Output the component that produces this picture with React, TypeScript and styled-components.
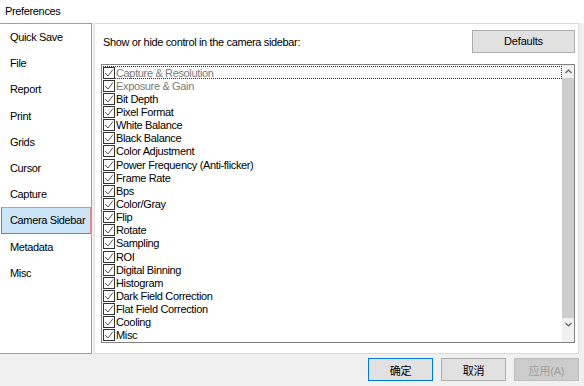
import React from "react";
import styled, { createGlobalStyle } from "styled-components";

const GlobalStyle = createGlobalStyle`
  html, body { margin: 0; padding: 0; }
  body {
    background: #f0f0f0;
    font-family: "Liberation Sans", Arial, sans-serif;
    font-size: 11px;
    letter-spacing: -0.35px;
    color: #000;
  }
`;

const Window = styled.div`
  width: 584px;
  height: 386px;
  display: flex;
  flex-direction: column;
  background: #f0f0f0;
  overflow: hidden;
  white-space: nowrap;
`;

const TitleBar = styled.div`
  height: 23px;
  flex: none;
  background: #fff;
  display: flex;
  align-items: center;
  padding-left: 5px;
  padding-bottom: 2px;
  box-sizing: border-box;
`;

const Body = styled.div`
  height: 331px;
  flex: none;
  display: flex;
  gap: 2px;
`;

const Sidebar = styled.div`
  width: 92px;
  box-sizing: border-box;
  background: #fff;
  border-top: 1px solid #a0a0a0;
  border-right: 1px solid #a0a0a0;
  border-bottom: 1px solid #a0a0a0;
  display: flex;
  flex-direction: column;
`;

const NavItem = styled.div<{ $active?: boolean }>`
  height: 26.2px;
  flex: none;
  display: flex;
  align-items: center;
  padding-left: 8px;
  margin-left: 1px;
  box-sizing: border-box;
  background: ${(p) => (p.$active ? "#cce4f7" : "transparent")};
  border: 1px solid transparent;
  ${(p) => p.$active && `border-color: #e88a8a #e88a8a #3f8fd6 #3f8fd6;`}
`;

const Panel = styled.div`
  width: 485px;
  box-sizing: border-box;
  background: #fff;
  border: 1px solid #dadada;
  border-left-color: #e3e3e3;
  display: flex;
  flex-direction: column;
  padding: 5px 3px 0 6px;
`;

const HeaderRow = styled.div`
  display: flex;
  align-items: center;
  justify-content: space-between;
  height: 24px;
`;

const Label = styled.div`
  padding-left: 2px;
  padding-top: 2px;
`;

const Button = styled.button<{ $primary?: boolean; $disabled?: boolean; $w?: number }>`
  width: ${(p) => p.$w ?? 65}px;
  height: 23px;
  box-sizing: border-box;
  background: ${(p) => (p.$disabled ? "#cccccc" : "#e1e1e1")};
  border: 1px solid ${(p) => (p.$primary ? "#0078d7" : p.$disabled ? "#bfbfbf" : "#adadad")};
  color: ${(p) => (p.$disabled ? "#a0a0a0" : "#000")};
  font-family: "Liberation Sans", "Noto Sans CJK SC", sans-serif;
  font-size: 11px;
  letter-spacing: -0.2px;
  padding: 0;
  margin: 0;
`;

const ListBox = styled.div`
  margin-top: 11px;
  width: 474px;
  height: 279px;
  box-sizing: border-box;
  border: 1px solid #828282;
  display: flex;
`;

const Rows = styled.div`
  flex: 1;
  padding: 1px 0 0 1px;
  display: flex;
  flex-direction: column;
`;

const Row = styled.div<{ $focus?: boolean; $disabled?: boolean }>`
  height: 13.15px;
  flex: none;
  display: flex;
  align-items: center;
  gap: 1px;
  box-sizing: border-box;
  color: ${(p) => (p.$disabled ? "#7a7a7a" : "#000")};
  border: 1px ${(p) => (p.$focus ? "dotted #333" : "solid transparent")};
  border-left: none;
  line-height: 12px;
`;

const Box = styled.span`
  width: 12px;
  height: 12px;
  box-sizing: border-box;
  border: 1px solid #333;
  background: #fff;
  display: inline-flex;
  align-items: center;
  justify-content: center;
  flex: none;
`;

const Scrollbar = styled.div`
  width: 12px;
  background: #f0f0f0;
  display: flex;
  flex-direction: column;
`;

const Arrow = styled.div`
  height: 13px;
  display: flex;
  align-items: center;
  justify-content: center;
  flex: none;
`;

const Thumb = styled.div`
  height: 240px;
  flex: none;
  background: #cdcdcd;
`;

const Spacer = styled.div`
  flex: 1;
`;

const Footer = styled.div`
  flex: 1;
  display: flex;
  justify-content: flex-end;
  align-items: flex-start;
  gap: 8px;
  padding: 4px 5px 0 0;
`;

const Check = () => (
  <svg width="10" height="10" viewBox="0 0 10 10">
    <path d="M1 5 L4 8 L9 1.5" fill="none" stroke="#555" strokeWidth="1" />
  </svg>
);

const Chevron = ({ up }: { up?: boolean }) => (
  <svg width="7" height="5" viewBox="0 0 7 5">
    <path
      d={up ? "M0.5 4 L3.5 1 L6.5 4" : "M0.5 1 L3.5 4 L6.5 1"}
      fill="none"
      stroke="#606060"
      strokeWidth="1.2"
    />
  </svg>
);

const navItems = [
  "Quick Save",
  "File",
  "Report",
  "Print",
  "Grids",
  "Cursor",
  "Capture",
  "Camera Sidebar",
  "Metadata",
  "Misc",
];

const controls = [
  "Capture & Resolution",
  "Exposure & Gain",
  "Bit Depth",
  "Pixel Format",
  "White Balance",
  "Black Balance",
  "Color Adjustment",
  "Power Frequency (Anti-flicker)",
  "Frame Rate",
  "Bps",
  "Color/Gray",
  "Flip",
  "Rotate",
  "Sampling",
  "ROI",
  "Digital Binning",
  "Histogram",
  "Dark Field Correction",
  "Flat Field Correction",
  "Cooling",
  "Misc",
];

export default function App() {
  return (
    <Window>
      <GlobalStyle />
      <TitleBar>Preferences</TitleBar>
      <Body>
        <Sidebar>
          {navItems.map((n) => (
            <NavItem key={n} $active={n === "Camera Sidebar"}>
              {n}
            </NavItem>
          ))}
        </Sidebar>
        <Panel>
          <HeaderRow>
            <Label>Show or hide control in the camera sidebar:</Label>
            <Button $w={103}>Defaults</Button>
          </HeaderRow>
          <ListBox>
            <Rows>
              {controls.map((c, i) => (
                <Row key={c} $focus={i === 0} $disabled={i < 2}>
                  <Box>
                    <Check />
                  </Box>
                  <span>{c}</span>
                </Row>
              ))}
            </Rows>
            <Scrollbar>
              <Arrow>
                <Chevron up />
              </Arrow>
              <Thumb />
              <Arrow>
                <Chevron />
              </Arrow>
              <Spacer />
            </Scrollbar>
          </ListBox>
        </Panel>
      </Body>
      <Footer>
        <Button $primary>确定</Button>
        <Button>取消</Button>
        <Button $disabled>应用(A)</Button>
      </Footer>
    </Window>
  );
}
